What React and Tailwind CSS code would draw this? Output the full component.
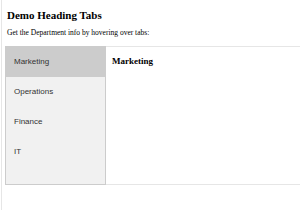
import React, { useState } from "react";

const tabs = ["Marketing", "Operations", "Finance", "IT"];

function App() {
  const [active, setActive] = useState("Marketing");

  return (
    <div className="w-[300px] h-[210px] overflow-hidden bg-white">
      <div className="ml-px h-full border-l border-[#e6e6e6] pl-[3px] pt-[7px]">
        <h3
          className="pl-[2px] text-[11px] font-bold leading-[16px] text-black"
          style={{ fontFamily: '"Liberation Serif", serif' }}
        >
          Demo Heading Tabs
        </h3>
        <p
          className="mt-[5px] pl-[2px] text-[7.5px] leading-[10px] text-black"
          style={{ fontFamily: '"Liberation Serif", serif' }}
        >
          Get the Department info by hovering over tabs:
        </p>
        <div className="mt-[8px] flex h-[139px]">
          <div className="w-[101px] shrink-0 border border-[#cccccc] bg-[#f1f1f1]">
            {tabs.map((t) => (
              <div
                key={t}
                onMouseOver={() => setActive(t)}
                className={
                  "h-[30px] flex items-center pl-[8px] text-[8px] text-[#333]" +
                  (active === t ? " bg-[#cccccc]" : "")
                }
                style={{ fontFamily: '"Liberation Sans", sans-serif' }}
              >
                {t}
              </div>
            ))}
          </div>
          <div className="flex-1 border-y border-[#e6e6e6] pl-[6px] pt-[8px]">
            <div
              className="text-[9px] font-bold leading-[12px] text-black"
              style={{ fontFamily: '"Liberation Serif", serif' }}
            >
              {active}
            </div>
          </div>
        </div>
      </div>
    </div>
  );
}

export default App;
